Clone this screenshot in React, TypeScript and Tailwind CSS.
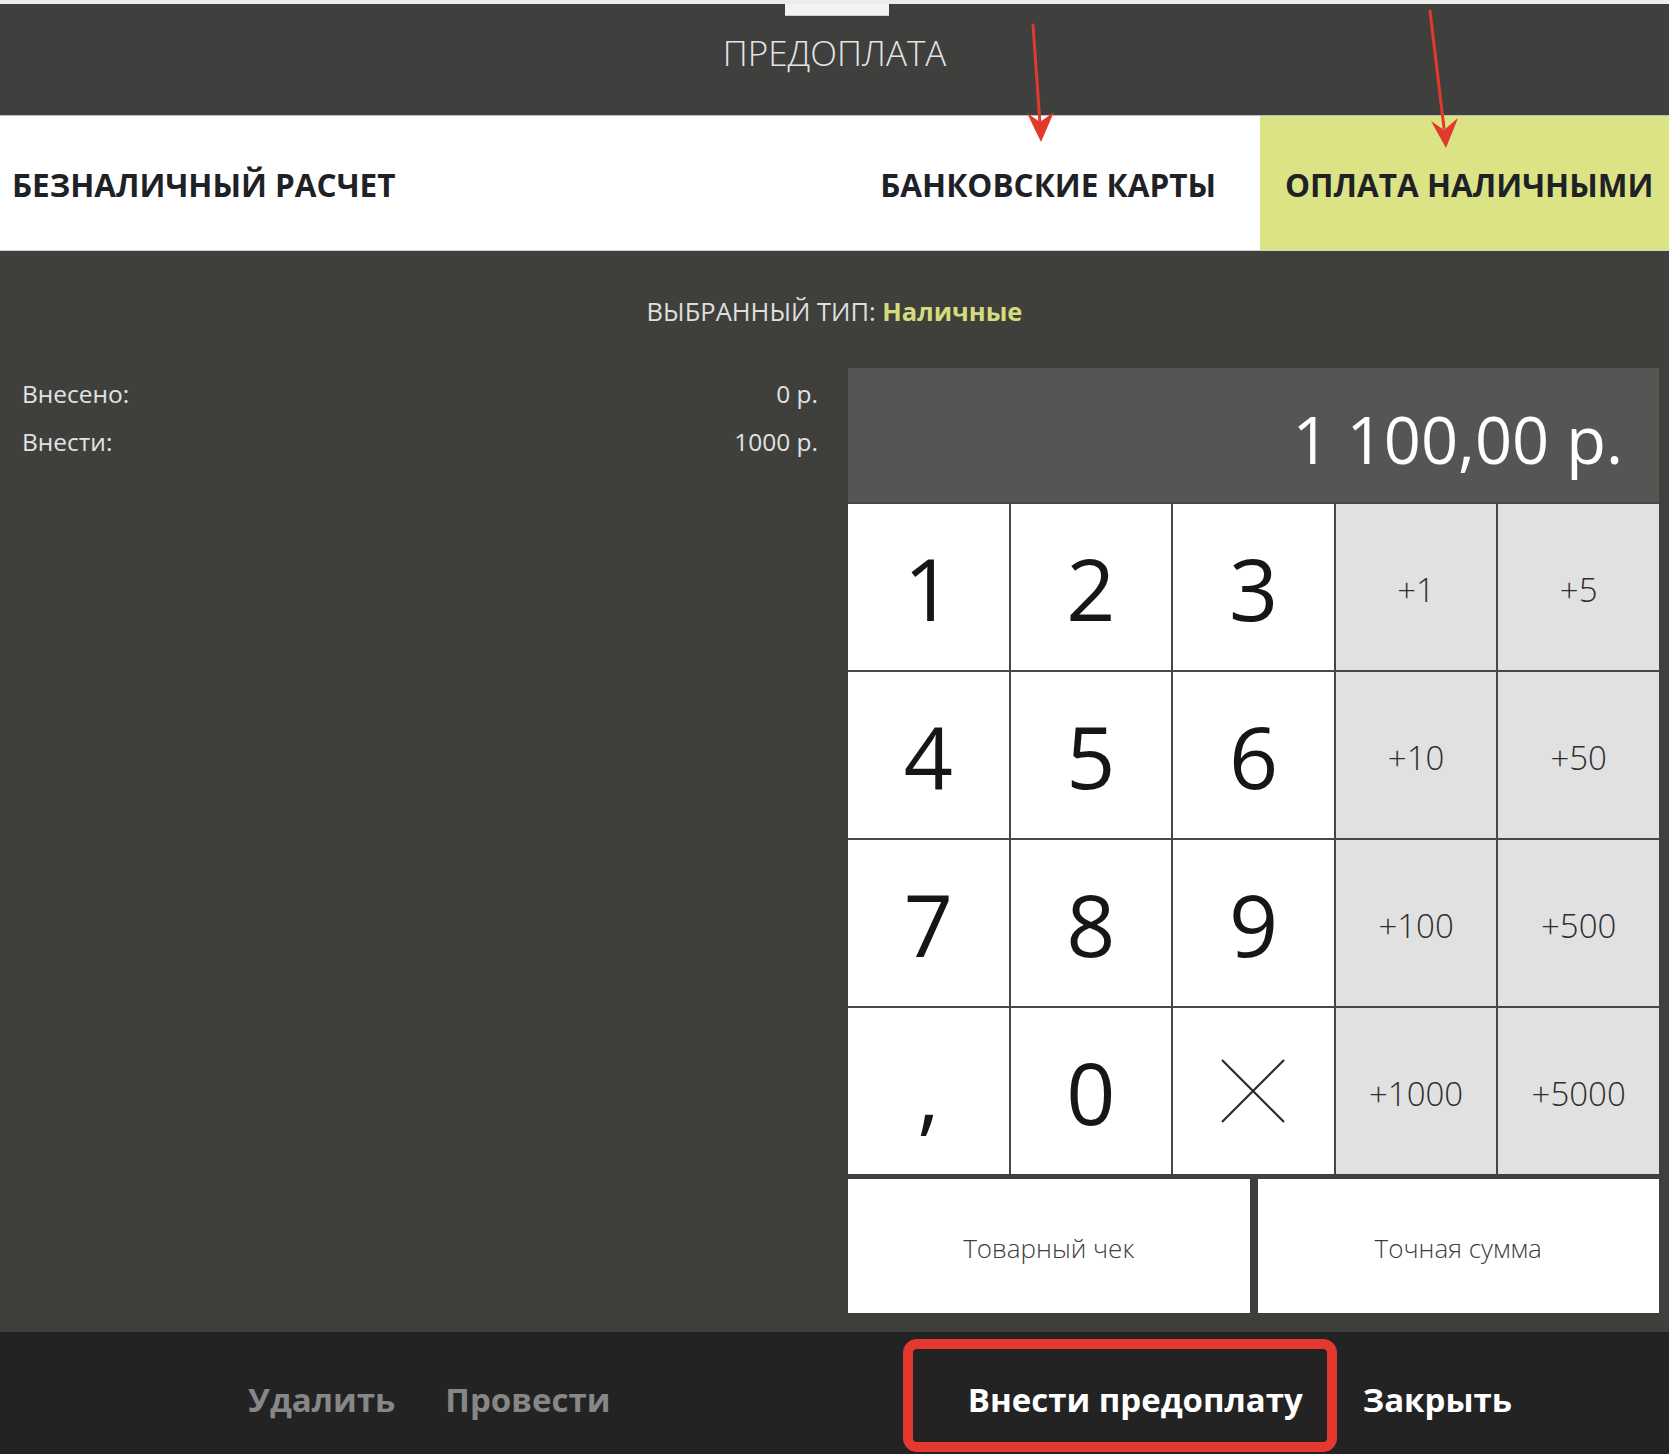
import React from 'react'

type KeyDef = { label: string; kind: 'digit' | 'add' | 'clear' }

const keys: KeyDef[] = [
  { label: '1', kind: 'digit' },
  { label: '2', kind: 'digit' },
  { label: '3', kind: 'digit' },
  { label: '+1', kind: 'add' },
  { label: '+5', kind: 'add' },
  { label: '4', kind: 'digit' },
  { label: '5', kind: 'digit' },
  { label: '6', kind: 'digit' },
  { label: '+10', kind: 'add' },
  { label: '+50', kind: 'add' },
  { label: '7', kind: 'digit' },
  { label: '8', kind: 'digit' },
  { label: '9', kind: 'digit' },
  { label: '+100', kind: 'add' },
  { label: '+500', kind: 'add' },
  { label: ',', kind: 'digit' },
  { label: '0', kind: 'digit' },
  { label: 'x', kind: 'clear' },
  { label: '+1000', kind: 'add' },
  { label: '+5000', kind: 'add' },
]

const Key = ({ k }: { k: KeyDef }) => {
  if (k.kind === 'add') {
    return (
      <button className="flex items-center justify-center bg-[#e1e1e1] pt-[4px] text-[33px] font-light leading-none text-[#2e2e2e]">
        {k.label}
      </button>
    )
  }
  if (k.kind === 'clear') {
    return (
      <button className="flex items-center justify-center bg-white">
        <svg width="64" height="64" viewBox="0 0 64 64" fill="none" stroke="#2a2a2a" strokeWidth="2.2">
          <path d="M1 1 L63 63 M63 1 L1 63" />
        </svg>
      </button>
    )
  }
  return (
    <button className="flex items-center justify-center bg-white pt-[2px] text-[86px] font-normal leading-none text-[#161616]">
      {k.label}
    </button>
  )
}

const Arrow = ({ shaft, head }: { shaft: string; head: string }) => (
  <>
    <path d={shaft} stroke="#e2392d" strokeWidth="3" strokeLinecap="round" fill="none" />
    <polygon points={head} fill="#e2392d" />
  </>
)

export default function App() {
  return (
    <div
      className="relative flex h-[1454px] w-[1669px] flex-col overflow-hidden bg-[#3f403c]"
      style={{ fontFamily: '"Open Sans", "Noto Sans", sans-serif' }}
    >
      {/* window strip */}
      <div className="h-[4px] bg-[#ececec]" />
      <div className="absolute left-[785px] top-[4px] h-[12px] w-[104px] border-b border-[#cfcfcf] bg-[#f2f2f2]" />

      {/* title */}
      <div className="flex h-[111px] items-center justify-center bg-[#3f403d] pb-[12px]">
        <span className="text-[35px] font-light text-[#e4e4e4]">ПРЕДОПЛАТА</span>
      </div>

      {/* payment tabs */}
      <div className="flex h-[135px] border-t border-[#bdbdbd] bg-white pt-[3px] text-[31.5px] font-bold text-[#1e2126]">
        <div className="flex flex-1 items-center pl-[12px]">БЕЗНАЛИЧНЫЙ РАСЧЕТ</div>
        <div className="flex items-center pr-[44px]">БАНКОВСКИЕ КАРТЫ</div>
        <div className="-mt-[3px] flex w-[409px] items-center bg-[#dce385] pl-[25px] pt-[3px]">ОПЛАТА НАЛИЧНЫМИ</div>
      </div>

      {/* body */}
      <div className="flex flex-1 flex-col border-t border-[#d0d0d0]">
        <div className="pt-[42px] text-center text-[25.5px] leading-[36px] text-[#dedede]">
          ВЫБРАННЫЙ ТИП: <span className="font-bold text-[#d3dc7c]">Наличные</span>
        </div>

        <div className="mt-[39px] flex">
          <div className="flex-1 pl-[22px] pr-[30px] pt-[2px] text-[24.5px] leading-[48px] text-[#e2e2e2]">
            <div className="flex justify-between">
              <span>Внесено:</span>
              <span>0 р.</span>
            </div>
            <div className="flex justify-between">
              <span>Внести:</span>
              <span>1000 р.</span>
            </div>
          </div>

          <div className="mr-[10px] w-[811px]">
            <div className="flex h-[134px] items-center justify-end bg-[#555654] pr-[36px] pt-[8px] text-[65px] leading-none text-white">
              1 100,00 р.
            </div>
            <div className="grid grid-cols-5 grid-rows-[repeat(4,166px)] gap-[2px] bg-[#474747] pt-[2px]">
              {keys.map((k) => (
                <Key key={k.label} k={k} />
              ))}
            </div>
            <div className="mt-[5px] grid h-[134px] grid-cols-2 gap-[8px] text-[26px] font-light text-[#3e3e3e]">
              <button className="bg-white pt-[4px]">Товарный чек</button>
              <button className="bg-white pt-[4px]">Точная сумма</button>
            </div>
          </div>
        </div>
      </div>

      {/* footer */}
      <div className="relative flex h-[122px] items-center bg-[#232323] pl-[248px] pr-[157px] pt-[14px] text-[33px] font-bold">
        <div className="flex gap-[50px] text-[#878787]">
          <span>Удалить</span>
          <span>Провести</span>
        </div>
        <div className="ml-auto flex gap-[60px] text-white">
          <span>Внести предоплату</span>
          <span>Закрыть</span>
        </div>
        <div className="absolute left-[903px] top-[7px] h-[113px] w-[434px] rounded-[14px] border-[10px] border-[#e3392e]" />
      </div>

      {/* annotation arrows */}
      <svg className="pointer-events-none absolute left-0 top-0" width="1669" height="160">
        <Arrow shaft="M1033 25 L1040 124" head="1041,142 1027,113 1040,122 1054,112" />
        <Arrow shaft="M1430 11 L1444 128" head="1446,148 1431,121 1444,130 1458,118" />
      </svg>
    </div>
  )
}
